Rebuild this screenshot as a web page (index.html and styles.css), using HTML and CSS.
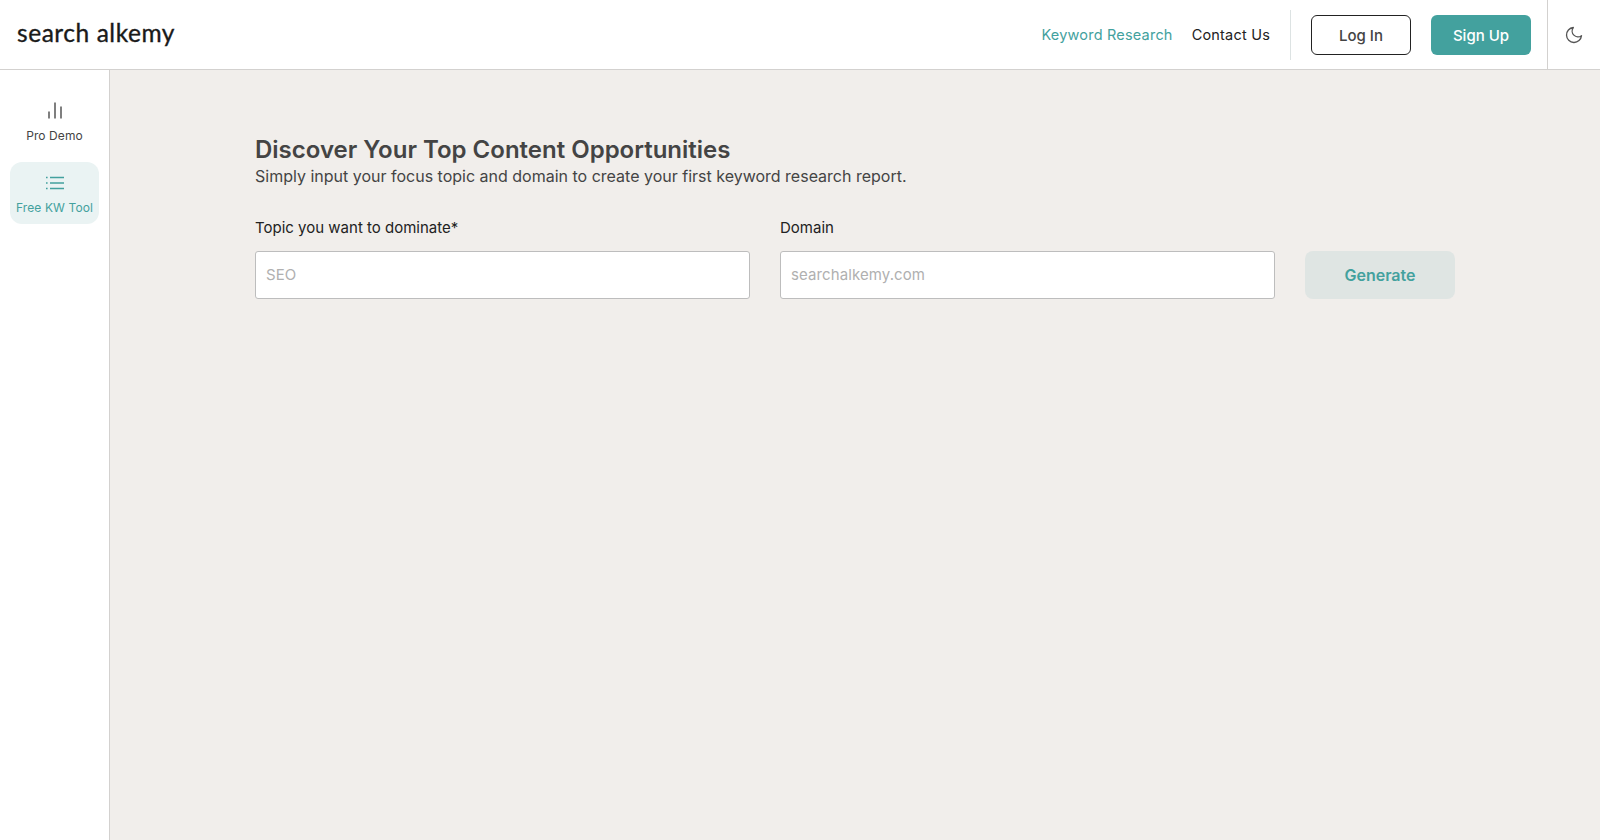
FILE: index.html
```html
<!DOCTYPE html>
<html lang="en">
<head>
<meta charset="utf-8">
<title>search alkemy</title>
<link rel="stylesheet" href="styles.css">
</head>
<body>
<header class="topbar">
  <a class="logo">search alkemy</a>
  <nav class="topnav">
    <a class="navlink navlink-active">Keyword Research</a>
    <a class="navlink">Contact Us</a>
  </nav>
  <div class="auth">
    <button class="btn btn-outline">Log In</button>
    <button class="btn btn-solid">Sign Up</button>
  </div>
  <div class="theme">
    <svg class="moon" viewBox="0 0 24 24" width="20" height="20" fill="none" stroke="#555" stroke-width="1.6" stroke-linecap="round" stroke-linejoin="round"><path d="M21 12.8A9 9 0 1 1 11.2 3a7 7 0 0 0 9.8 9.8z"/></svg>
  </div>
</header>
<div class="shell">
  <aside class="sidebar">
    <a class="sideitem">
      <svg viewBox="0 0 20 20" width="20" height="20" fill="none" stroke="#555" stroke-width="1.5"><path d="M4 10.500v7M10 1.500v16M16 5.500v12"/></svg>
      <span>Pro Demo</span>
    </a>
    <a class="sideitem sideitem-active">
      <svg viewBox="0 0 20 20" width="20" height="20" fill="none" stroke="#43a19e" stroke-width="1.7"><path d="M5 4.500h14M5 10h14M5 15.500h14M1 4.500h1.600M1 10h1.600M1 15.500h1.600"/></svg>
      <span>Free KW Tool</span>
    </a>
  </aside>
  <main class="content">
    <h1 class="title">Discover Your Top Content Opportunities</h1>
    <p class="subtitle">Simply input your focus topic and domain to create your first keyword research report.</p>
    <form class="form">
      <label class="field">
        <span class="label">Topic you want to dominate*</span>
        <input class="input" placeholder="SEO">
      </label>
      <label class="field">
        <span class="label">Domain</span>
        <input class="input" placeholder="searchalkemy.com">
      </label>
      <button class="generate" type="button">Generate</button>
    </form>
  </main>
</div>
</body>
</html>
```
FILE: styles.css
```css
* { box-sizing: border-box; }
html, body { margin: 0; height: 100%; }
body {
  font-family: Inter, "Open Sans", sans-serif;
  background: #fff;
  color: #222;
  overflow: hidden;
}
.topbar {
  height: 70px;
  display: flex;
  align-items: center;
  background: #fff;
  border-bottom: 1px solid #d3d1cf;
  padding-left: 17px;
}
.logo {
  font-family: Lato, sans-serif;
  font-size: 24.500px;
  letter-spacing: 0.55px;
  -webkit-text-stroke: 0.35px #1a1a1a;
  color: #1a1a1a;
  margin-right: auto;
  padding-bottom: 5px;
}
.topnav { display: flex; align-items: center; gap: 19px; padding-right: 20px; height: 50px; border-right: 1px solid #dde3e3; }
.navlink { font-size: 14.500px; letter-spacing: 0.2px; color: #222; }
.navlink-active { color: #43a19e; }
.auth { display: flex; gap: 20px; padding: 0 16px 0 20px; }
.btn { width: 100px; height: 40px; padding: 1px 0 0; border-radius: 6px; font: 500 15px Inter, sans-serif; }
.btn-outline { background: #fff; border: 1px solid #222; color: #444; }
.btn-solid { background: #43a19e; border: 0; color: #fff; }
.theme { width: 53px; height: 69px; border-left: 1px solid #d3d1cf; display: flex; align-items: center; justify-content: center; }
.shell { display: flex; height: 770px; }
.sidebar {
  width: 110px;
  background: #fff;
  border-right: 1px solid #d3d1cf;
  padding: 20px 10px 0;
  display: flex;
  flex-direction: column;
  gap: 10px;
}
.sideitem {
  height: 62px;
  padding-top: 2px;
  border-radius: 12px;
  display: flex;
  flex-direction: column;
  align-items: center;
  justify-content: center;
  gap: 7px;
  font-size: 12px;
  letter-spacing: 0.1px;
  color: #444;
}
.sideitem-active { background: #eaf3f3; color: #43a19e; }
.content { flex: 1; background: #f1eeeb; padding: 64px 145px 0; }
.title { margin: 0; font-size: 24px; line-height: 32px; font-weight: 600; color: #444; }
.subtitle { margin: 0; font-size: 16px; line-height: 21px; font-weight: 400; color: #444; }
.form { display: flex; align-items: flex-end; gap: 30px; margin-top: 30px; }
.field { width: 495px; display: flex; flex-direction: column; gap: 12px; }
.label { font-size: 15px; line-height: 22px; color: #222; }
.input {
  height: 48px;
  border: 1px solid #bdbdbd;
  border-radius: 3px;
  background: #fff;
  padding: 0 10px 2px;
  font: 400 15px Inter, sans-serif;
  letter-spacing: 0.1px;
}
.input::placeholder { color: #b0b0b0; }
.generate {
  width: 150px;
  height: 48px;
  border: 0;
  border-radius: 8px;
  background: #dfe5e3;
  color: #43a19e;
  font: 600 16px Inter, sans-serif;
}
```
